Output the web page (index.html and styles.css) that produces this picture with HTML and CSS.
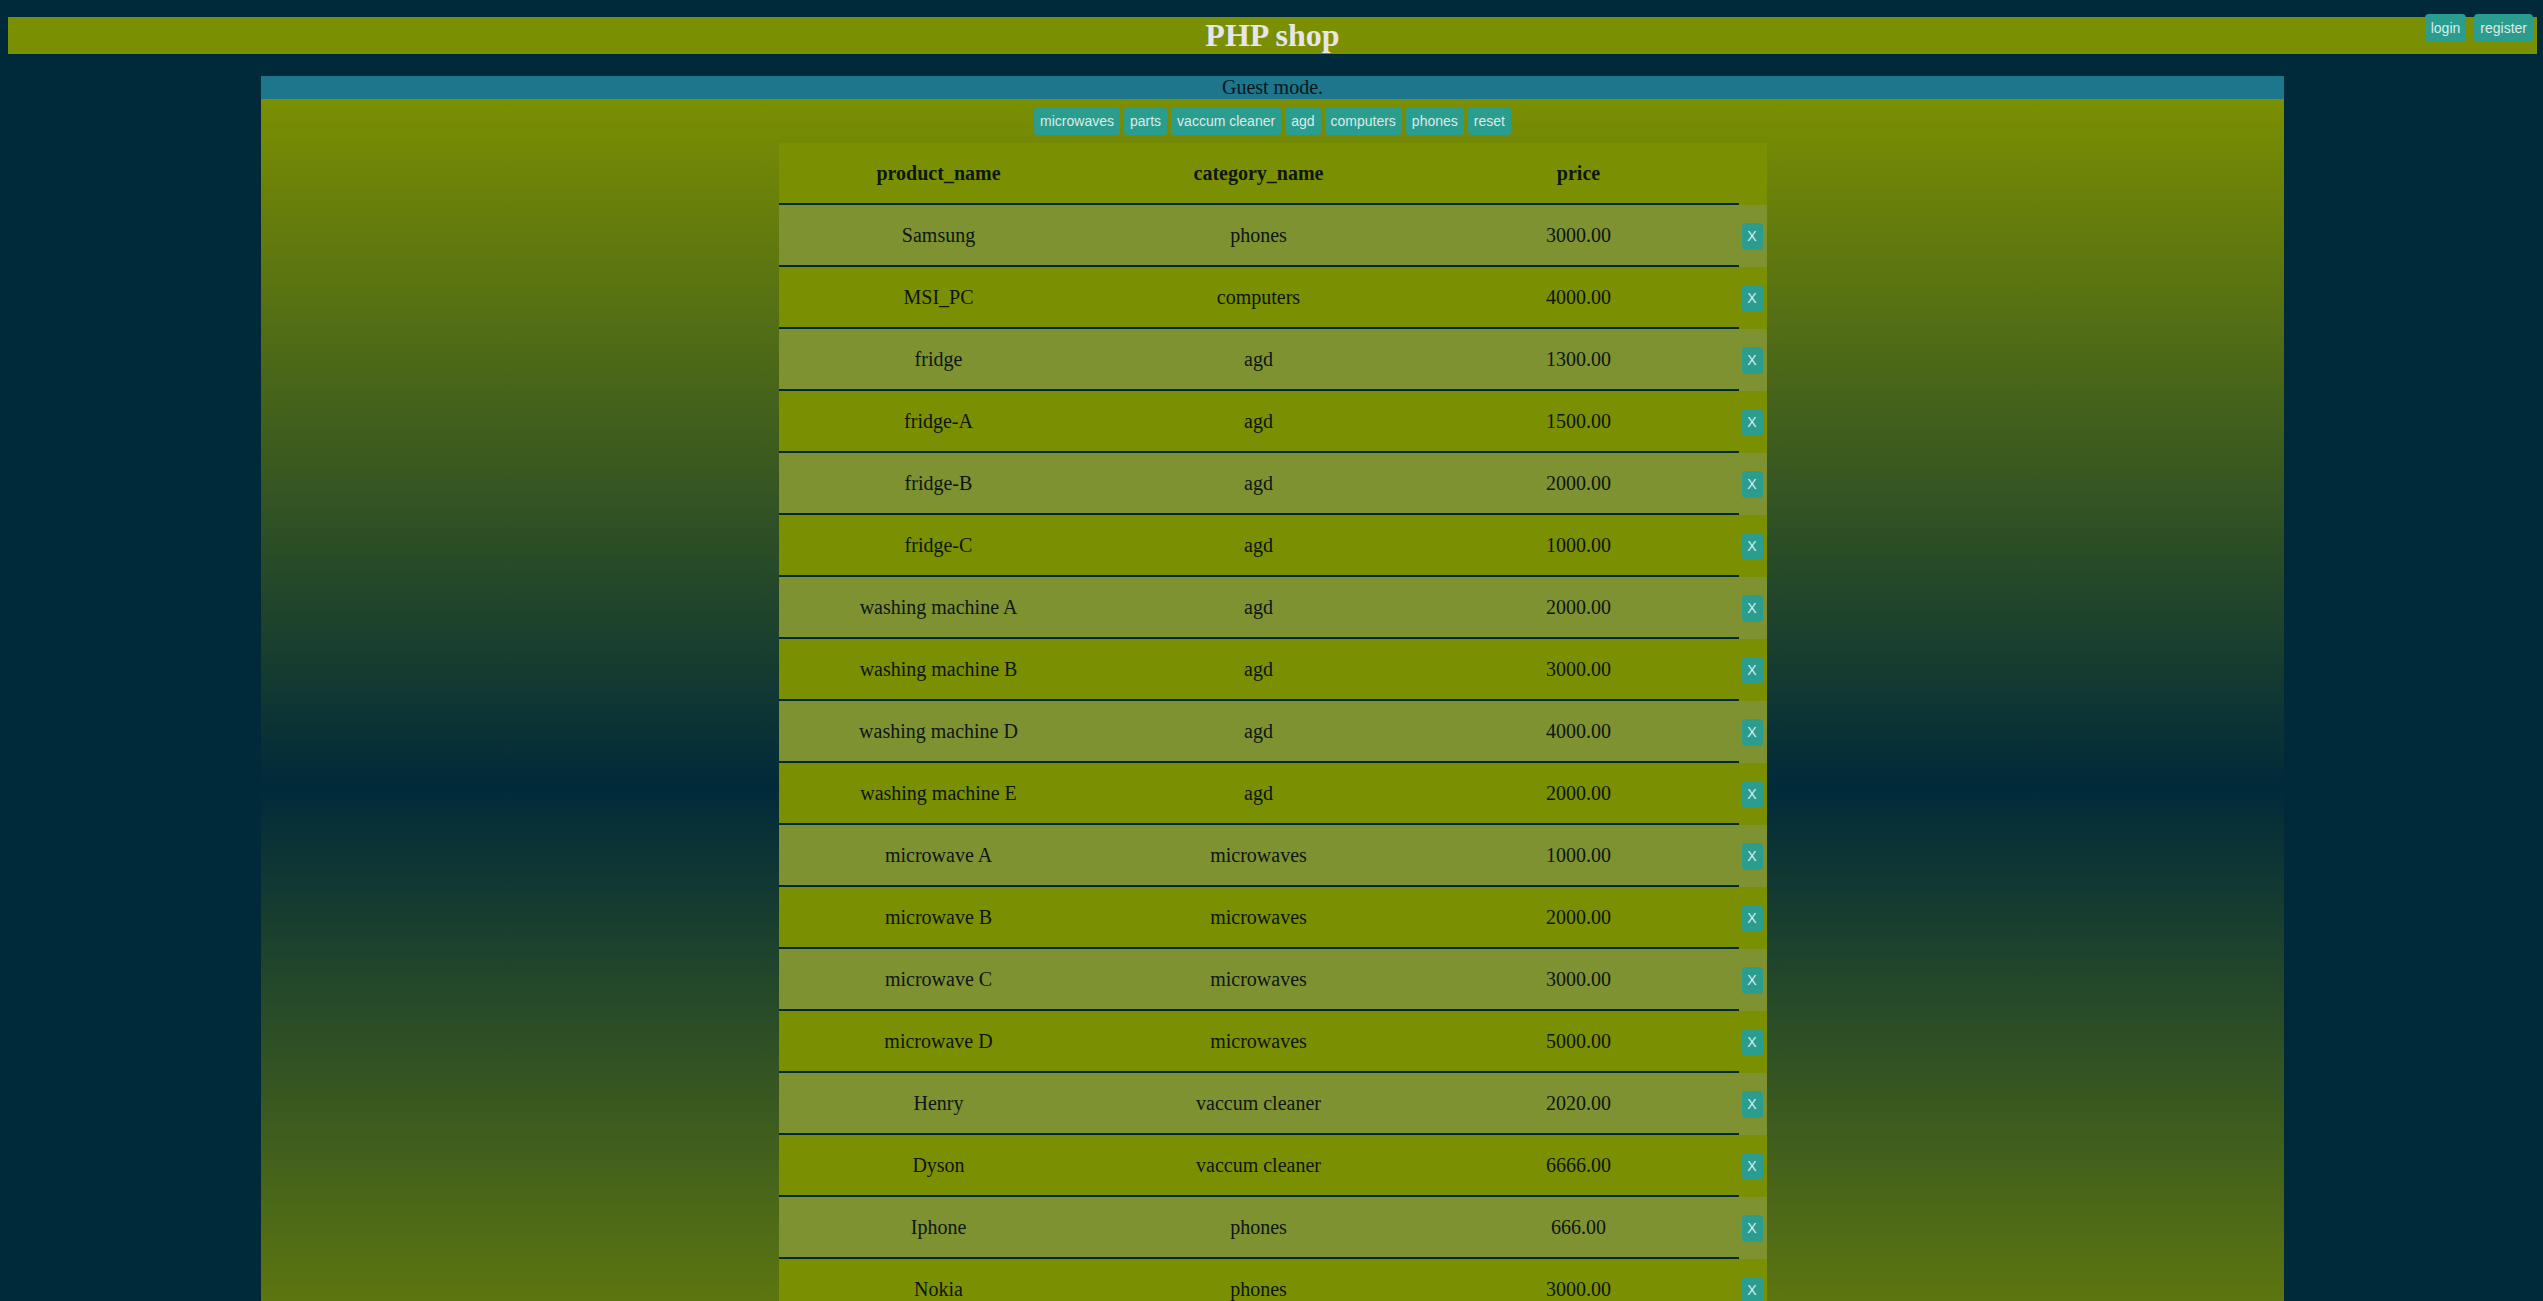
FILE: index.html
```html
<!DOCTYPE html>
<html lang="en">
<head>
<meta charset="utf-8">
<title>PHP shop</title>
<link rel="stylesheet" href="styles.css">
</head>
<body>
<header class="top-bar">
  <h1 class="title">PHP shop</h1>
</header>
<div class="auth">
  <button class="btn">login</button>
  <button class="btn">register</button>
</div>
<main class="main">
  <div class="guest">Guest mode.</div>
  <div class="content">
    <div class="filters">
      <button class="btn">microwaves</button>
      <button class="btn">parts</button>
      <button class="btn">vaccum cleaner</button>
      <button class="btn">agd</button>
      <button class="btn">computers</button>
      <button class="btn">phones</button>
      <button class="btn">reset</button>
    </div>
    <table class="products">
      <thead>
        <tr><th>product_name</th><th>category_name</th><th>price</th><th class="x"></th></tr>
      </thead>
      <tbody>
        <tr><td>Samsung</td><td>phones</td><td>3000.00</td><td class="x"><button class="btn del">X</button></td></tr>
        <tr><td>MSI_PC</td><td>computers</td><td>4000.00</td><td class="x"><button class="btn del">X</button></td></tr>
        <tr><td>fridge</td><td>agd</td><td>1300.00</td><td class="x"><button class="btn del">X</button></td></tr>
        <tr><td>fridge-A</td><td>agd</td><td>1500.00</td><td class="x"><button class="btn del">X</button></td></tr>
        <tr><td>fridge-B</td><td>agd</td><td>2000.00</td><td class="x"><button class="btn del">X</button></td></tr>
        <tr><td>fridge-C</td><td>agd</td><td>1000.00</td><td class="x"><button class="btn del">X</button></td></tr>
        <tr><td>washing machine A</td><td>agd</td><td>2000.00</td><td class="x"><button class="btn del">X</button></td></tr>
        <tr><td>washing machine B</td><td>agd</td><td>3000.00</td><td class="x"><button class="btn del">X</button></td></tr>
        <tr><td>washing machine D</td><td>agd</td><td>4000.00</td><td class="x"><button class="btn del">X</button></td></tr>
        <tr><td>washing machine E</td><td>agd</td><td>2000.00</td><td class="x"><button class="btn del">X</button></td></tr>
        <tr><td>microwave A</td><td>microwaves</td><td>1000.00</td><td class="x"><button class="btn del">X</button></td></tr>
        <tr><td>microwave B</td><td>microwaves</td><td>2000.00</td><td class="x"><button class="btn del">X</button></td></tr>
        <tr><td>microwave C</td><td>microwaves</td><td>3000.00</td><td class="x"><button class="btn del">X</button></td></tr>
        <tr><td>microwave D</td><td>microwaves</td><td>5000.00</td><td class="x"><button class="btn del">X</button></td></tr>
        <tr><td>Henry</td><td>vaccum cleaner</td><td>2020.00</td><td class="x"><button class="btn del">X</button></td></tr>
        <tr><td>Dyson</td><td>vaccum cleaner</td><td>6666.00</td><td class="x"><button class="btn del">X</button></td></tr>
        <tr><td>Iphone</td><td>phones</td><td>666.00</td><td class="x"><button class="btn del">X</button></td></tr>
        <tr><td>Nokia</td><td>phones</td><td>3000.00</td><td class="x"><button class="btn del">X</button></td></tr>
      </tbody>
    </table>
  </div>
</main>
</body>
</html>
```

FILE: styles.css
```css
html, body {
  background: #002a3a;
}
body {
  margin: 8px 6px 8px 8px;
  font-family: "Liberation Serif", "Times New Roman", serif;
  color: #0c1612;
}
.top-bar {
  margin-top: 9px;
  background: #7b8f02;
  height: 37px;
}
.title {
  margin: 0;
  font-size: 32px;
  line-height: 37px;
  font-weight: bold;
  text-align: center;
  color: #e6e6e6;
}
.auth {
  position: absolute;
  top: 14px;
  right: 10px;
  display: flex;
  gap: 8px;
}
.btn {
  font-family: "Liberation Sans", Arial, sans-serif;
  font-size: 14px;
  height: 28px;
  padding: 0 6px;
  border: none;
  border-radius: 4px;
  background: #2a9d8f;
  color: #dcebe8;
  cursor: pointer;
}
.main {
  width: 80%;
  margin: 22px auto 0;
}
.guest {
  background: #1d768b;
  text-align: center;
  font-size: 20px;
  line-height: 23px;
  color: #08171c;
}
.content {
  background: linear-gradient(to bottom, #7b8f02 0px, #002a3a 687px, #7b8f02 1374px);
  padding-bottom: 8px;
}
.filters {
  display: flex;
  justify-content: center;
  gap: 4px;
  padding: 8px 0;
}
.products {
  margin: 0 auto;
  border-spacing: 0;
  border-collapse: separate;
}
.products th,
.products td {
  width: 320px;
  height: 60px;
  padding: 0;
  text-align: center;
  vertical-align: middle;
  font-size: 20px;
  border-bottom: 2px solid #002a3a;
}
.products th {
  font-weight: bold;
}
.products th.x,
.products td.x {
  width: 21px;
  padding: 0 4px 0 3px;
  border-bottom: none;
}
.products thead tr,
.products tbody tr:nth-child(even) {
  background: #7b8f02;
}
.products tbody tr:nth-child(odd) {
  background: #7f9231;
}
.del {
  width: 21px;
  height: 27px;
  padding: 0;
  display: block;
}
```
